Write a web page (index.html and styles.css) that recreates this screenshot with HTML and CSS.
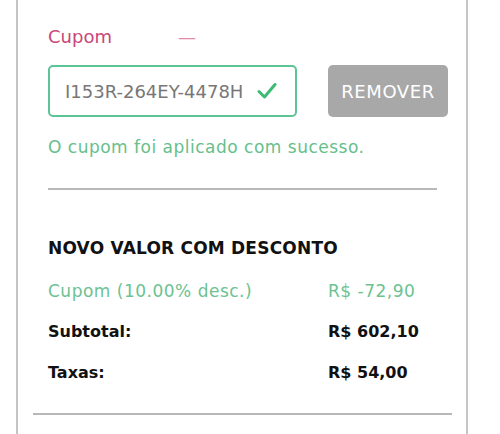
FILE: index.html
```html
<!DOCTYPE html>
<html lang="pt-BR">
<head>
    <meta charset="UTF-8">
    <meta name="viewport" content="width=device-width, initial-scale=1.0">
    <title>Cupom</title>
    <link rel="stylesheet" href="styles.css">
</head>
<body>

    <div class="panel">

        <div class="coupon-head">
            <span class="coupon-label">Cupom</span>
            <span class="coupon-toggle">&mdash;</span>
        </div>

        <div class="coupon-row">
            <div class="coupon-input">
                <span class="coupon-code">I153R-264EY-4478H</span>
                <svg class="check" width="20" height="18" viewBox="0 0 20 18">
                    <path d="M2 9.5 L7.5 15 L18 2.5" fill="none" stroke="#3dbb74" stroke-width="3" stroke-linecap="round" stroke-linejoin="round"/>
                </svg>
            </div>
            <button class="remove-btn">REMOVER</button>
        </div>

        <p class="success">O cupom foi aplicado com sucesso.</p>

        <hr class="divider">

        <h3 class="summary-title">NOVO VALOR COM DESCONTO</h3>

        <div class="summary-row discount">
            <span>Cupom (10.00% desc.)</span>
            <span class="amount">R$ -72,90</span>
        </div>
        <div class="summary-row strong">
            <span>Subtotal:</span>
            <span class="amount">R$ 602,10</span>
        </div>
        <div class="summary-row strong">
            <span>Taxas:</span>
            <span class="amount">R$ 54,00</span>
        </div>

        <hr class="divider-bottom">
    </div>

</body>
</html>
```

FILE: styles.css
```css
body {
    font-family: "DejaVu Sans", Arial, sans-serif;
    margin: 0;
    padding: 0;
    background-color: #fff;
}
.panel {
    margin-left: 16px;
    width: 452px;
    height: 434px;
    border-left: 2px solid #c4c4c4;
    border-right: 2px solid #c4c4c4;
    box-sizing: border-box;
    padding-top: 25px;
}
.coupon-head {
    display: flex;
    align-items: center;
    margin-left: 30px;
    font-size: 18px;
    height: 22px;
}
.coupon-label {
    color: #c9467a;
    width: 130px;
}
.coupon-toggle {
    color: #e48aa9;
    font-size: 18px;
}
.coupon-row {
    display: flex;
    margin-left: 30px;
    margin-top: 18px;
}
.coupon-input {
    width: 249px;
    height: 52px;
    border: 2px solid #5cc495;
    border-radius: 5px;
    box-sizing: border-box;
    display: flex;
    align-items: center;
    padding-left: 15px;
    padding-right: 18px;
}
.coupon-code {
    flex: 1;
    color: #777;
    font-size: 18px;
}
.remove-btn {
    margin-left: 31px;
    width: 120px;
    height: 52px;
    border: none;
    border-radius: 5px;
    background-color: #a8a8a8;
    color: #fff;
    font-family: inherit;
    font-size: 18px;
    letter-spacing: 0.6px;
}
.success {
    margin: 20px 0 0 30px;
    line-height: 20px;
    color: #66c08c;
    font-size: 17px;
    letter-spacing: 0.5px;
}
.divider {
    margin: 31px 0 0 30px;
    width: 389px;
    border: none;
    border-top: 2px solid #b8b8b8;
}
.summary-title {
    margin: 48px 0 0 30px;
    line-height: 20px;
    font-size: 17px;
    letter-spacing: 0.2px;
    color: #111;
}
.summary-row {
    display: flex;
    margin-left: 30px;
    height: 41px;
    align-items: center;
}
.summary-row span:first-child {
    width: 280px;
}
.discount {
    margin-top: 12px;
    color: #6cc292;
    font-size: 17px;
    letter-spacing: 0.5px;
}
.strong {
    font-weight: bold;
    font-size: 16px;
    color: #111;
}
.divider-bottom {
    margin: 20px 0 0 15px;
    width: 419px;
    border: none;
    border-top: 2px solid #b8b8b8;
}
```
